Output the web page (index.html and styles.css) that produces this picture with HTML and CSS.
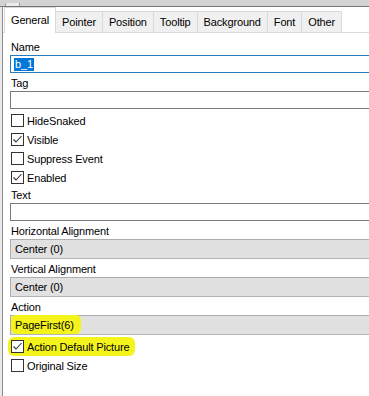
FILE: index.html
```html
<!DOCTYPE html>
<html lang="en">
<head>
  <meta charset="UTF-8" />
  <title>Properties - General</title>
  <link rel="stylesheet" href="styles.css">
</head>
<body>
  <div class="frame-top">
    <div class="frame-grip"></div>
  </div>

  <div class="panel">
    <div class="tabs">
      <div class="tab active">General</div>
      <div class="tab">Pointer</div>
      <div class="tab">Position</div>
      <div class="tab">Tooltip</div>
      <div class="tab">Background</div>
      <div class="tab">Font</div>
      <div class="tab">Other</div>
    </div>

    <div class="form">
      <div class="label">Name</div>
      <div class="textbox focused"><span class="selection">b_1</span></div>

      <div class="label">Tag</div>
      <div class="textbox"></div>

      <div class="checks">
        <div class="check"><span class="box"></span>HideSnaked</div>
        <div class="check"><span class="box checked"><svg viewBox="0 0 11 11"><path d="M1.5 5.5 L4 8 L9.5 2" /></svg></span>Visible</div>
        <div class="check"><span class="box"></span>Suppress Event</div>
        <div class="check"><span class="box checked"><svg viewBox="0 0 11 11"><path d="M1.5 5.5 L4 8 L9.5 2" /></svg></span>Enabled</div>
      </div>

      <div class="label tight">Text</div>
      <div class="textbox"></div>

      <div class="label">Horizontal Alignment</div>
      <div class="combo">Center (0)</div>

      <div class="label">Vertical Alignment</div>
      <div class="combo">Center (0)</div>

      <div class="label">Action</div>
      <div class="combo"><span class="marker">PageFirst(6)</span></div>

      <div class="checks after-combo">
        <div class="check marked"><span class="box checked"><svg viewBox="0 0 11 11"><path d="M1.5 5.5 L4 8 L9.5 2" /></svg></span>Action Default Picture</div>
        <div class="check"><span class="box"></span>Original Size</div>
      </div>
    </div>
  </div>
</body>
</html>
```

FILE: styles.css
```css
body {
  margin: 0;
  padding: 0;
  font-family: 'Liberation Sans', Arial, sans-serif;
  font-size: 11px;
  letter-spacing: -0.15px;
  color: #000;
  background: #e9e9e9;
  height: 100vh;
  overflow: hidden;
}

.frame-top {
  height: 6px;
  background: #d3d3d3;
  border-bottom: 1px solid #747474;
  display: flex;
  align-items: flex-end;
}

.frame-grip {
  margin-left: 5px;
  width: 13px;
  height: 3px;
  background: #ececec;
  border-left: 1px solid #9c9c9c;
  border-right: 1px solid #9c9c9c;
}

.panel {
  margin-left: 2px;
  border-left: 1px solid #8c8c8c;
  background: #fff;
  height: 100%;
  overflow: hidden;
}

.tabs {
  display: flex;
  align-items: flex-end;
  height: 25px;
  padding-left: 2px;
  border-bottom: 1px solid #d9d9d9;
}

.tab {
  height: 20px;
  line-height: 20px;
  padding: 0 6px;
  margin-left: -1px;
  background: #f0f0f0;
  border: 1px solid #d9d9d9;
  border-bottom: none;
  white-space: nowrap;
}

.tab.active {
  height: 25px;
  line-height: 24px;
  margin-bottom: -1px;
  background: #fff;
  position: relative;
  z-index: 1;
}

.form {
  display: flex;
  flex-direction: column;
  padding: 4px 0 0 7px;
  margin-right: -20px;
}

.label {
  height: 16px;
  line-height: 16px;
  margin-top: 2px;
  padding-left: 1px;
}

.label.tight {
  margin-top: 0;
}

.textbox {
  height: 16px;
  border: 1px solid #7a7a7a;
  background: #fff;
  padding-left: 3px;
  display: flex;
  align-items: center;
}

.textbox.focused {
  border-color: #2a7ab8;
}

.selection {
  background: #0078d7;
  color: #fff;
  line-height: 13px;
  padding: 0 1px;
}

.combo {
  height: 18px;
  line-height: 18px;
  border: 1px solid #adadad;
  border-bottom-color: #b4b4b4;
  background: #e1e1e1;
  padding-left: 4px;
}

.marker {
  display: inline-block;
  height: 19px;
  margin-top: -1px;
  margin-left: -4px;
  padding: 0 7px 0 4px;
  line-height: 20px;
  background: #f4f41c;
  border-radius: 5px;
}

.checks {
  display: flex;
  flex-direction: column;
  margin-top: 2px;
}

.check {
  height: 19px;
  display: flex;
  align-items: center;
  gap: 3px;
  padding-left: 1px;
}

.check.marked {
  align-self: flex-start;
  margin-left: -2px;
  padding: 0 6px 0 3px;
  background: #f4f41c;
  border-radius: 6px;
}

.box {
  width: 11px;
  height: 11px;
  border: 1px solid #333;
  background: #fff;
  display: flex;
}

.box svg {
  width: 11px;
  height: 11px;
}

.box svg path {
  fill: none;
  stroke: #333;
  stroke-width: 1.1;
}
```
